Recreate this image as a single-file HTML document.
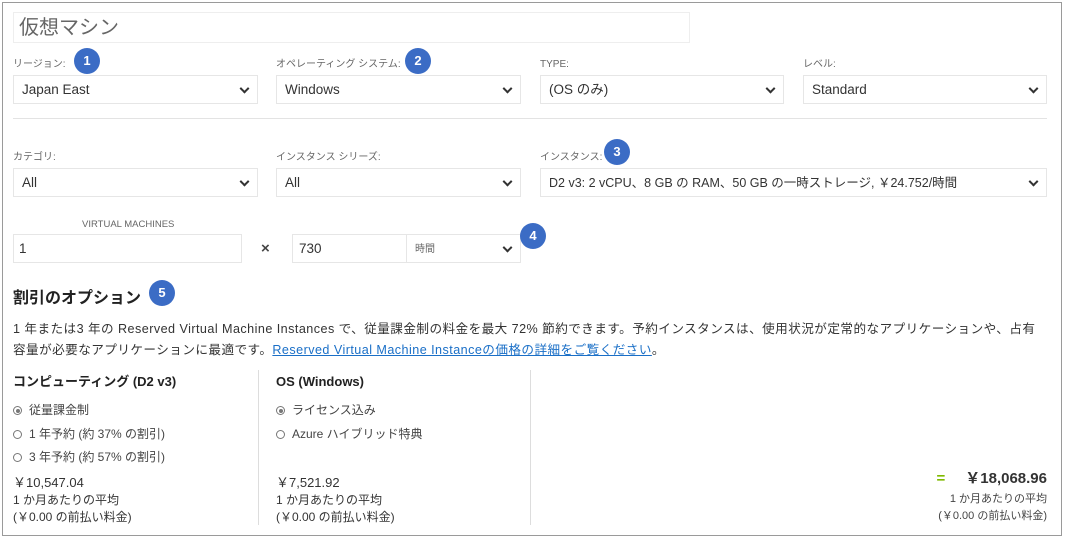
<!DOCTYPE html>
<html><head><meta charset="utf-8"><style>
*{box-sizing:border-box;margin:0;padding:0}
body{width:1066px;height:539px;background:#fff;font-family:"Liberation Sans","Noto Sans CJK JP",sans-serif;color:#333;position:relative;overflow:hidden}
.frame{position:absolute;left:2px;top:2px;width:1060px;height:534px;border:1px solid #9a9a9a}
.a{position:absolute;white-space:nowrap}
.box{position:absolute;border:1px solid #e6e6e6;background:#fff;font-size:13.5px;line-height:16px;color:#333;padding-left:8px;display:flex;align-items:center}
.sel::after{content:"";position:absolute;right:9px;top:50%;width:5px;height:5px;border-right:2px solid #333;border-bottom:2px solid #333;transform:translateY(-70%) rotate(45deg)}
.lbl{position:absolute;font-size:10px;line-height:12px;color:#666;white-space:nowrap}
.b{position:absolute;width:26px;height:26px;border-radius:50%;background:#3b6cc5;color:#fff;font-size:13px;font-weight:bold;text-align:center;line-height:26px}
.hr{position:absolute;left:13px;width:1034px;height:1px;background:#e3e3e3}
.r{position:absolute;font-size:12px;line-height:14px;color:#444;white-space:nowrap}
.r i{display:inline-block;width:9px;height:9px;border:1px solid #777;border-radius:50%;margin-right:7px;vertical-align:-1px;position:relative}
.r i.on::after{content:"";position:absolute;left:1.5px;top:1.5px;width:4px;height:4px;border-radius:50%;background:#777}
.s{font-size:12px;line-height:14px;color:#333;position:absolute;white-space:nowrap}
</style></head><body>
<div class="frame"></div>
<div class="box" style="left:13px;top:12px;width:677px;height:31px;border-color:#eee;font-size:20px;line-height:24px;color:#666;padding-left:5px">仮想マシン</div>

<div class="lbl" style="left:13px;top:59px">リージョン:</div>
<div class="lbl" style="left:276px;top:59px">オペレーティング システム:</div>
<div class="lbl" style="left:540px;top:59px">TYPE:</div>
<div class="lbl" style="left:803px;top:59px">レベル:</div>
<div class="b" style="left:74px;top:48px">1</div>
<div class="b" style="left:405px;top:48px">2</div>
<div class="box sel" style="left:13px;top:75px;width:245px;height:29px">Japan East</div>
<div class="box sel" style="left:276px;top:75px;width:245px;height:29px">Windows</div>
<div class="box sel" style="left:540px;top:75px;width:244px;height:29px">(OS のみ)</div>
<div class="box sel" style="left:803px;top:75px;width:244px;height:29px">Standard</div>
<div class="hr" style="top:118px"></div>

<div class="lbl" style="left:13px;top:152px">カテゴリ:</div>
<div class="lbl" style="left:276px;top:152px">インスタンス シリーズ:</div>
<div class="lbl" style="left:540px;top:152px">インスタンス:</div>
<div class="b" style="left:604px;top:139px">3</div>
<div class="box sel" style="left:13px;top:168px;width:245px;height:29px">All</div>
<div class="box sel" style="left:276px;top:168px;width:245px;height:29px">All</div>
<div class="box sel" style="left:540px;top:168px;width:507px;height:29px;font-size:12.5px">D2 v3: 2 vCPU、8 GB の RAM、50 GB の一時ストレージ, ￥24.752/時間</div>

<div class="lbl" style="left:82px;top:219px;font-size:9.5px">VIRTUAL MACHINES</div>
<div class="box" style="left:13px;top:234px;width:229px;height:29px;padding-left:5px">1</div>
<div class="a" style="left:261px;top:240px;font-size:15px;font-weight:bold;color:#444">×</div>
<div class="box" style="left:292px;top:234px;width:115px;height:29px;padding-left:6px">730</div>
<div class="box sel" style="left:406px;top:234px;width:115px;height:29px;font-size:10px;line-height:12px;color:#666;padding-top:2px">時間</div>
<div class="b" style="left:520px;top:223px">4</div>

<div class="a" style="left:13px;top:289px;font-size:16px;line-height:20px;font-weight:bold;color:#222">割引のオプション</div>
<div class="b" style="left:149px;top:280px">5</div>
<div class="a" style="left:13px;top:321px;font-size:12.6px;line-height:16px;letter-spacing:0.45px;color:#333">1 年または3 年の Reserved Virtual Machine Instances で、従量課金制の料金を最大 72% 節約できます。予約インスタンスは、使用状況が定常的なアプリケーションや、占有</div>
<div class="a" style="left:13px;top:342px;font-size:12.6px;line-height:16px;letter-spacing:0.45px;color:#333">容量が必要なアプリケーションに最適です。<span style="color:#1a6fc7;text-decoration:underline">Reserved Virtual Machine Instanceの価格の詳細をご覧ください</span>。</div>

<div style="position:absolute;left:258px;top:370px;width:1px;height:155px;background:#ddd"></div>
<div style="position:absolute;left:530px;top:370px;width:1px;height:155px;background:#ddd"></div>
<div class="a" style="left:13px;top:374px;font-size:13px;line-height:16px;font-weight:bold;color:#222">コンピューティング (D2 v3)</div>
<div class="a" style="left:276px;top:374px;font-size:13px;line-height:16px;font-weight:bold;color:#222">OS (Windows)</div>
<div class="r" style="left:13px;top:403px"><i class="on"></i>従量課金制</div>
<div class="r" style="left:13px;top:427px"><i></i>1 年予約 (約 37% の割引)</div>
<div class="r" style="left:13px;top:450px"><i></i>3 年予約 (約 57% の割引)</div>
<div class="r" style="left:276px;top:403px"><i class="on"></i>ライセンス込み</div>
<div class="r" style="left:276px;top:427px"><i></i>Azure ハイブリッド特典</div>
<div class="s" style="left:13px;top:475px;font-size:13px;line-height:15px">￥10,547.04</div>
<div class="s" style="left:13px;top:493px">1 か月あたりの平均</div>
<div class="s" style="left:13px;top:510px">(￥0.00 の前払い料金)</div>
<div class="s" style="left:276px;top:475px;font-size:13px;line-height:15px">￥7,521.92</div>
<div class="s" style="left:276px;top:493px">1 か月あたりの平均</div>
<div class="s" style="left:276px;top:510px">(￥0.00 の前払い料金)</div>

<div class="s" style="right:19px;top:470px;font-size:15px;line-height:18px;font-weight:bold;color:#333"><span style="color:#7fba00;margin-right:20px">=</span>￥18,068.96</div>
<div class="s" style="right:19px;top:492px;font-size:11px;color:#444">1 か月あたりの平均</div>
<div class="s" style="right:19px;top:509px;font-size:11px;color:#444">(￥0.00 の前払い料金)</div>
</body></html>
